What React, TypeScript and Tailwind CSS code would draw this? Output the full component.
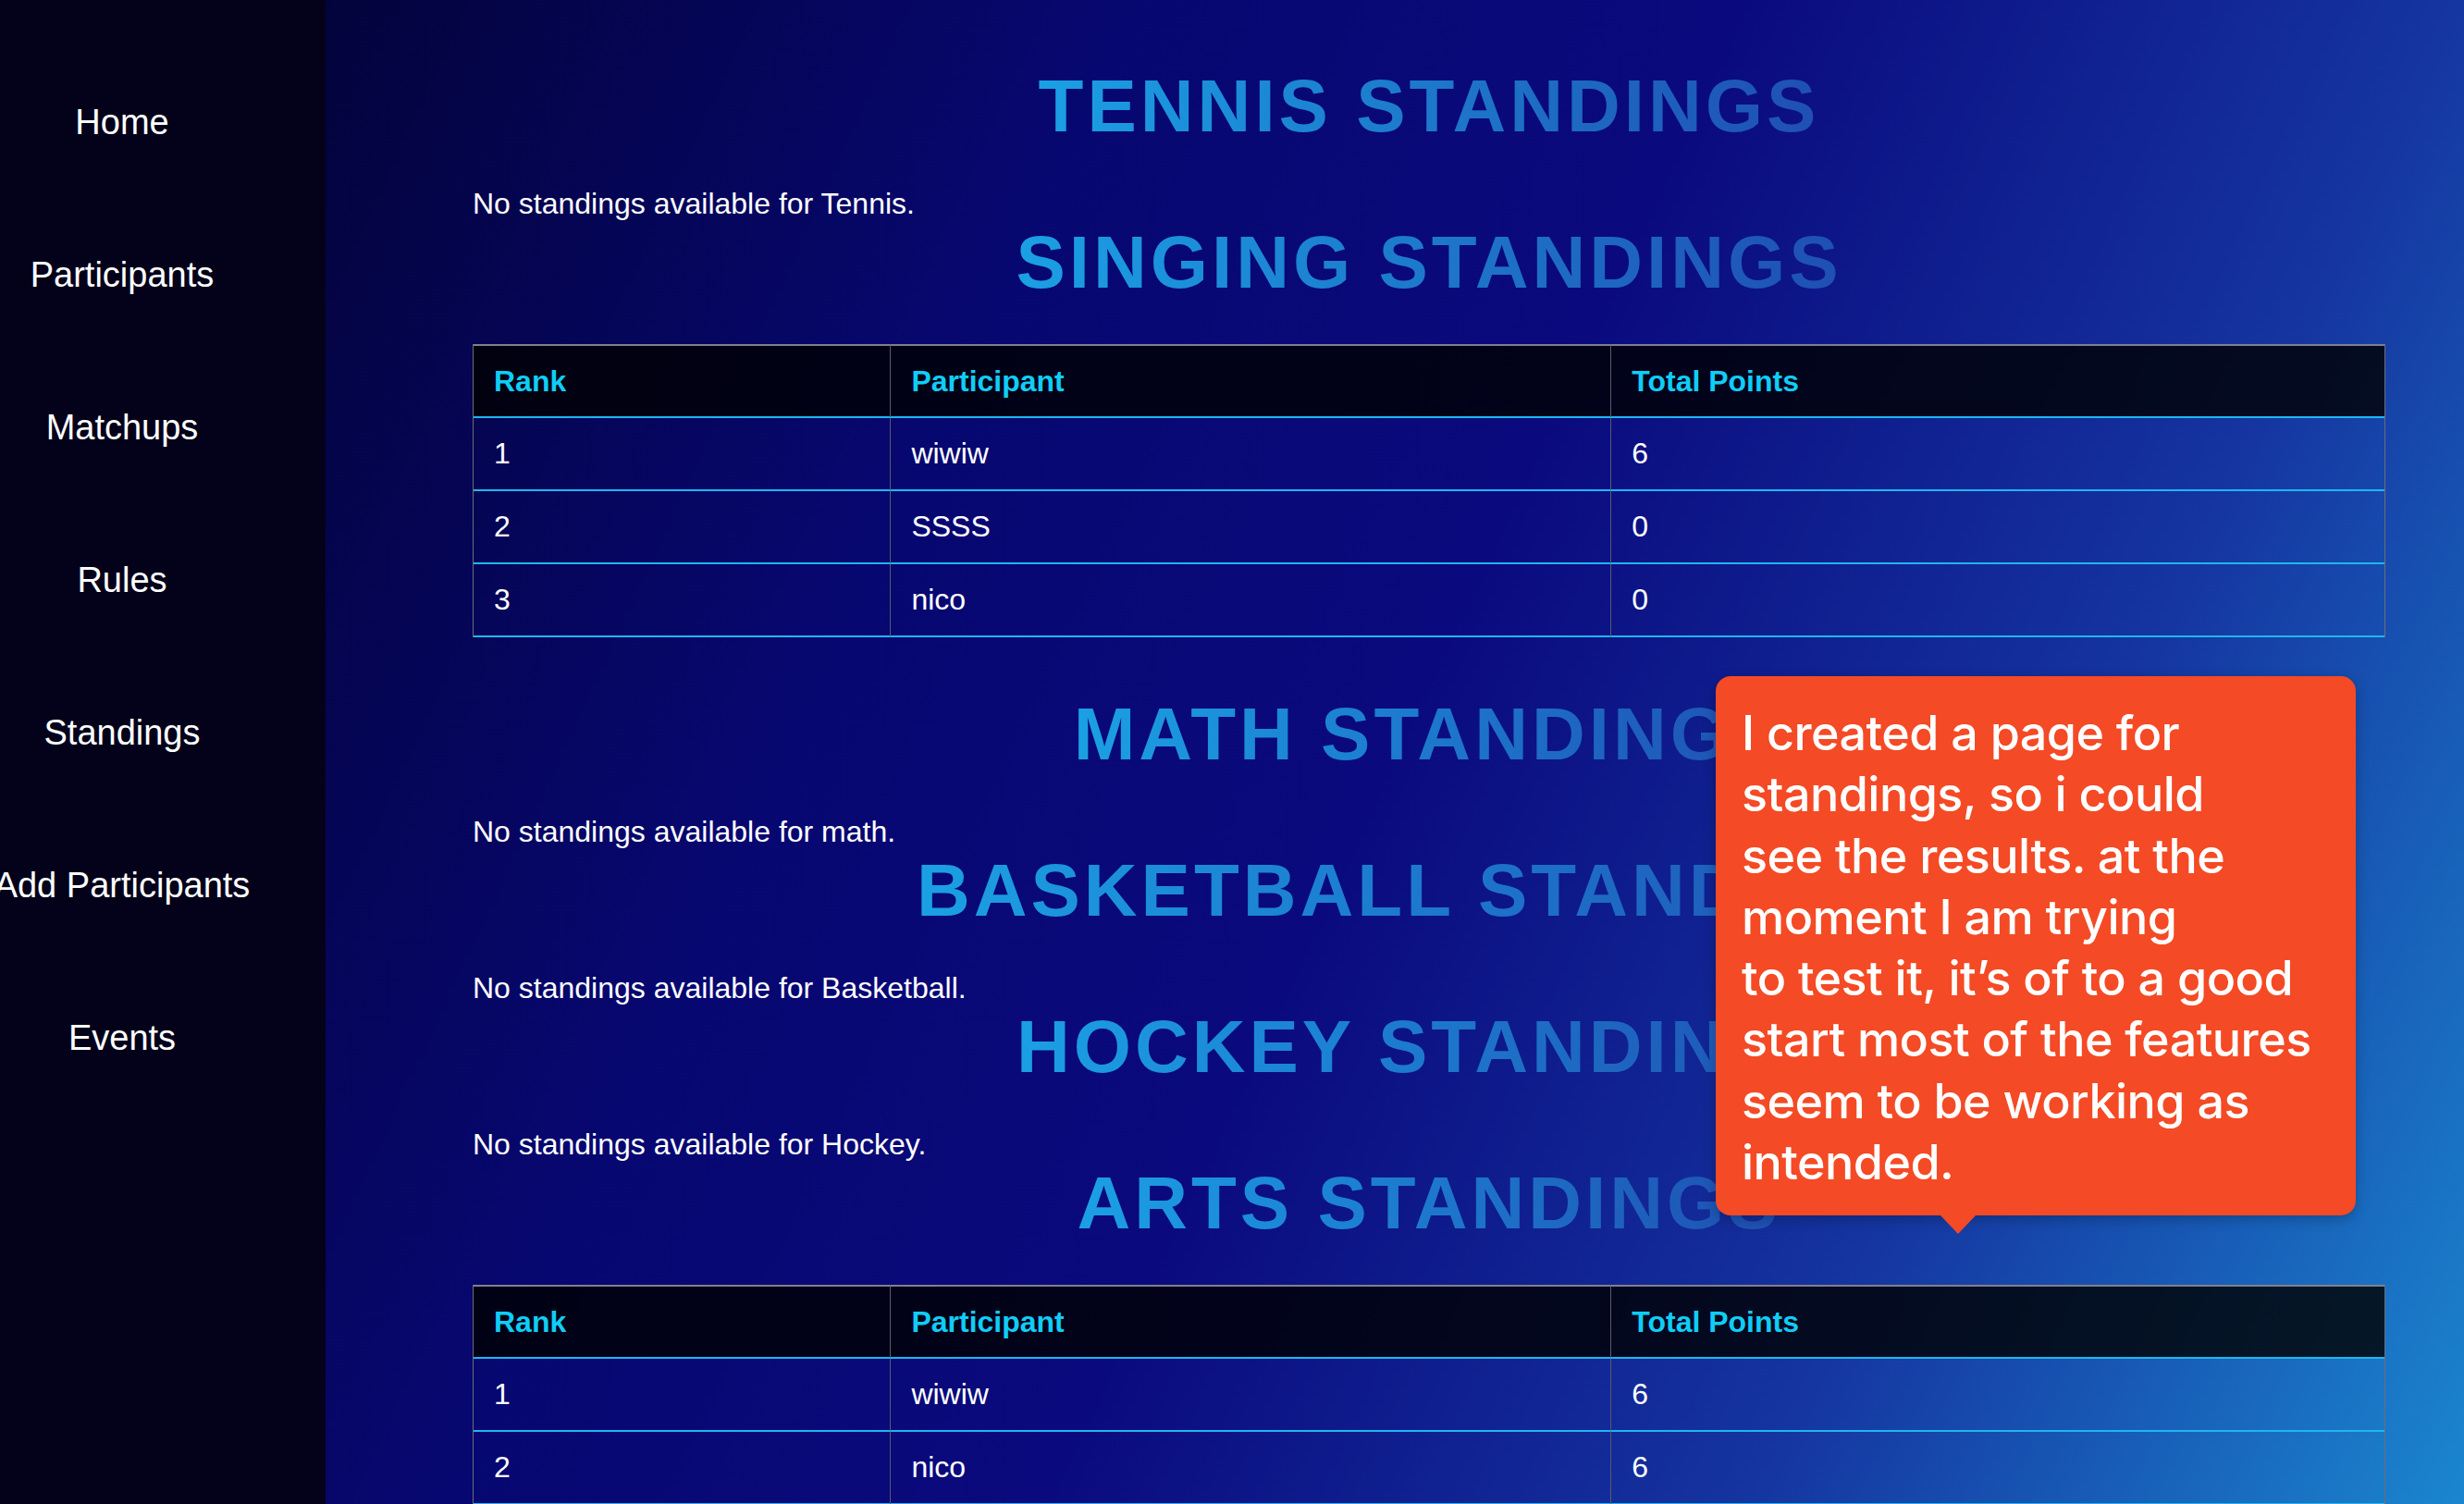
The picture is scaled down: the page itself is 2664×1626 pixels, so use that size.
import React from 'react'

interface Standing {
  rank: number
  name: string
  points: number
}

interface Section {
  event: string
  standings: Standing[]
}

const sections: Section[] = [
  { event: 'Tennis', standings: [] },
  {
    event: 'Singing',
    standings: [
      { rank: 1, name: 'wiwiw', points: 6 },
      { rank: 2, name: 'SSSS', points: 0 },
      { rank: 3, name: 'nico', points: 0 }
    ]
  },
  { event: 'math', standings: [] },
  { event: 'Basketball', standings: [] },
  { event: 'Hockey', standings: [] },
  {
    event: 'Arts',
    standings: [
      { rank: 1, name: 'wiwiw', points: 6 },
      { rank: 2, name: 'nico', points: 6 }
    ]
  }
]

const navItems = ['Home', 'Participants', 'Matchups', 'Rules', 'Standings', 'Add Participants', 'Events']

const noteLines = [
  'I created a page for',
  'standings, so i could',
  'see the results. at the',
  'moment I am trying',
  'to test it, it’s of to a good',
  'start most of the features',
  'seem to be working as',
  'intended.'
]

function StandingsTable({ rows }: { rows: Standing[] }) {
  return (
    <table className="w-full table-fixed border-separate border-spacing-0 border-x border-[#6d6d78] mb-[59px]">
      <colgroup>
        <col className="w-[21.8%]" />
        <col className="w-[37.7%]" />
        <col className="w-[40.5%]" />
      </colgroup>
      <thead>
        <tr className="bg-black/80">
          {['Rank', 'Participant', 'Total Points'].map((h, i) => (
            <th
              key={h}
              className={
                'text-left font-bold text-[32px] leading-[36px] text-[#10cdf6] px-[22px] py-[20px] border-t-2 border-t-[#80808c] border-b-2 border-b-[#1fb6ef] ' +
                (i > 0 ? 'border-l border-l-[#5a5a68]' : '')
              }
            >
              {h}
            </th>
          ))}
        </tr>
      </thead>
      <tbody>
        {rows.map((r) => (
          <tr key={r.rank}>
            <td className="px-[22px] py-[20px] text-[32px] leading-[37px] text-white border-b-2 border-b-[#1fb6ef]">{r.rank}</td>
            <td className="px-[22px] py-[20px] text-[32px] leading-[37px] text-white border-b-2 border-b-[#1fb6ef] border-l border-l-[#5a5a68]">{r.name}</td>
            <td className="px-[22px] py-[20px] text-[32px] leading-[37px] text-white border-b-2 border-b-[#1fb6ef] border-l border-l-[#5a5a68]">{r.points}</td>
          </tr>
        ))}
      </tbody>
    </table>
  )
}

export default function App() {
  return (
    <div className="relative flex h-[1626px] w-[2664px] overflow-hidden font-['Liberation_Sans',Arial,sans-serif]">
      {/* Barra lateral */}
      <aside className="w-[352px] shrink-0 bg-[#03021a]">
        <nav className="flex w-[264px] flex-col pt-[50px]">
          {navItems.map((item) => (
            <a key={item} className="flex h-[165px] items-center justify-center whitespace-nowrap text-[38px] text-white">
              {item}
            </a>
          ))}
        </nav>
      </aside>

      {/* Conteúdo */}
      <main className="flex-1 bg-[linear-gradient(115deg,#03033c_0%,#070770_28%,#0a0a7e_50%,#1535a0_75%,#1b86cf_100%)] pl-[159px] pr-[85px] pt-[69px]">
        {sections.map((s) => (
          <section key={s.event}>
            <h2 className="mb-[42px] text-center">
              <span className="inline-block bg-gradient-to-r from-[#1ba0e4] to-[#1f4fb2] bg-clip-text text-[80px] font-bold uppercase leading-[92px] tracking-[4px] text-transparent">
                {s.event} Standings
              </span>
            </h2>
            {s.standings.length === 0 ? (
              <p className="text-[32px] leading-[35px] text-white">No standings available for {s.event}.</p>
            ) : (
              <StandingsTable rows={s.standings} />
            )}
          </section>
        ))}
      </main>

      {/* Balão de anotação */}
      <div className="absolute left-[1855px] top-[731px] w-[692px] rounded-[16px] bg-[#f44a25] px-[28px] pb-[24px] pt-[29px] shadow-[0_4px_14px_rgba(0,0,0,0.25)]">
        <div className="font-['Inter',sans-serif] text-[52px] font-medium leading-[66.3px] tracking-[-0.01em] text-white">
          {noteLines.map((l) => (
            <div key={l} className="whitespace-nowrap">
              {l}
            </div>
          ))}
        </div>
        <div className="absolute left-[243px] top-full h-0 w-0 border-x-[19px] border-t-[20px] border-x-transparent border-t-[#f44a25]" />
      </div>
    </div>
  )
}
